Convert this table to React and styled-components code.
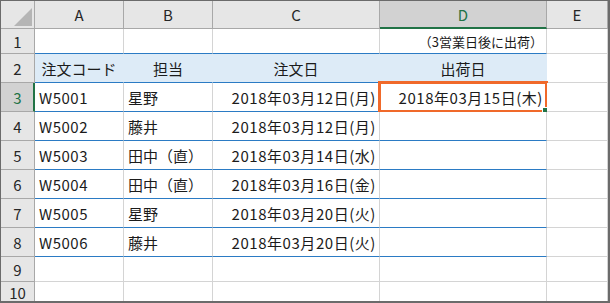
import styled, { createGlobalStyle } from "styled-components";

const GlobalStyle = createGlobalStyle`
  body {
    margin: 0;
    background: #ffffff;
  }
`;

const FONT = `"Noto Sans CJK JP", "Noto Sans", sans-serif`;
const GRID = "#d4d4d4";
const HEAD_LINE = "#a8a8a8";
const TABLE_LINE = "#2b7bc4";
const TABLE_FILL = "#ddebf7";
const EXCEL_GREEN = "#217346";

let Sheet = styled.div`
  box-sizing: border-box;
  width: 610px;
  height: 303px;
  display: grid;
  grid-template-columns: 34px 89px 89px 167px 167px 1fr;
  grid-template-rows: 28px 25px repeat(7, 29px) 25px 1fr;
  border-style: solid;
  border-color: #6b6b6b;
  border-width: 1px 2px 2px 1px;
  overflow: hidden;
  font-family: ${FONT};
  color: #1b1b1b;
`;

let Corner = styled.div`
  background: #e6e6e6;
  border-right: 1px solid ${HEAD_LINE};
  border-bottom: 1px solid ${HEAD_LINE};
  display: flex;
  align-items: flex-end;
  justify-content: flex-end;
  padding: 0 2px 2px 0;
`;

let ColHeader = styled.div`
  box-sizing: border-box;
  background: ${(p) => (p.$active ? "#d2d2d2" : "#e6e6e6")};
  color: ${(p) => (p.$active ? EXCEL_GREEN : "#262626")};
  border-right: 1px solid ${HEAD_LINE};
  border-bottom: ${(p) =>
    p.$active ? `2px solid ${EXCEL_GREEN}` : `1px solid ${HEAD_LINE}`};
  display: flex;
  align-items: center;
  justify-content: center;
  font-size: 15px;
  padding-top: ${(p) => (p.$active ? "1px" : "0")};
`;

let RowHeader = styled.div`
  box-sizing: border-box;
  background: ${(p) => (p.$active ? "#d2d2d2" : "#e6e6e6")};
  color: ${(p) => (p.$active ? EXCEL_GREEN : "#262626")};
  border-bottom: 1px solid ${HEAD_LINE};
  border-right: ${(p) =>
    p.$active ? `2px solid ${EXCEL_GREEN}` : `1px solid ${HEAD_LINE}`};
  display: flex;
  align-items: center;
  justify-content: center;
  font-size: 15px;
  padding-left: ${(p) => (p.$active ? "1px" : "0")};
`;

let Cell = styled.div`
  position: relative;
  box-sizing: border-box;
  background: ${(p) => (p.$fill ? TABLE_FILL : "#ffffff")};
  border-right: 1px solid ${(p) => (p.$fill ? TABLE_FILL : GRID)};
  border-bottom: 1px solid ${(p) => (p.$tableLine ? TABLE_LINE : GRID)};
  display: flex;
  align-items: center;
  justify-content: ${(p) =>
    p.$align === "right" ? "flex-end" : p.$align === "center" ? "center" : "flex-start"};
  padding: 1px ${(p) => (p.$align === "right" ? "3px" : "4px")} 0 4px;
  font-size: ${(p) => (p.$small ? "13px" : "15px")};
  letter-spacing: ${(p) => p.$spacing || "0"};
  white-space: nowrap;
`;

let Selection = styled.div`
  position: absolute;
  top: -2px;
  left: -2px;
  right: -2px;
  bottom: -2px;
  border: 3px solid #f0692a;
  pointer-events: none;
`;

let FillHandle = styled.div`
  position: absolute;
  right: -4px;
  bottom: -4px;
  width: 5px;
  height: 5px;
  background: ${EXCEL_GREEN};
  border: 1px solid #ffffff;
`;

const columns = ["A", "B", "C", "D", "E"];
const align = ["left", "left", "right", "right", "left"];
// codes and dates use wider figures than the default digits
const spacing = ["0.5px", "0", "0.55px", "0.55px", "0"];

const rows = [
  { n: 1, cells: ["", "", "", "（3営業日後に出荷）", ""] },
  { n: 2, header: true, cells: ["注文コード", "担当", "注文日", "出荷日", ""] },
  { n: 3, cells: ["W5001", "星野", "2018年03月12日(月)", "2018年03月15日(木)", ""] },
  { n: 4, cells: ["W5002", "藤井", "2018年03月12日(月)", "", ""] },
  { n: 5, cells: ["W5003", "田中（直）", "2018年03月14日(水)", "", ""] },
  { n: 6, cells: ["W5004", "田中（直）", "2018年03月16日(金)", "", ""] },
  { n: 7, cells: ["W5005", "星野", "2018年03月20日(火)", "", ""] },
  { n: 8, cells: ["W5006", "藤井", "2018年03月20日(火)", "", ""] },
  { n: 9, cells: ["", "", "", "", ""] },
  { n: 10, cells: ["", "", "", "", ""] },
];

function CornerMark() {
  return (
    <svg width="18" height="18" viewBox="0 0 18 18">
      <polygon points="18,0 18,18 0,18" fill="#b5b5b5" />
    </svg>
  );
}

export default function App() {
  return (
    <>
      <GlobalStyle />
      <Sheet>
        <Corner>
          <CornerMark />
        </Corner>
        {columns.map((c) => (
          <ColHeader key={c} $active={c === "D"}>
            {c}
          </ColHeader>
        ))}
        {rows.map((row) => (
          <Row key={row.n} row={row} />
        ))}
      </Sheet>
    </>
  );
}

function Row({ row }) {
  let inTable = row.n >= 1 && row.n <= 8;
  return (
    <>
      <RowHeader $active={row.n === 3}>{row.n}</RowHeader>
      {row.cells.map((text, i) => {
        let tableCol = i < 4;
        let selected = row.n === 3 && i === 3;
        let plain = !row.header && row.n > 2;
        return (
          <Cell
            key={i}
            $align={row.header ? "center" : align[i]}
            $fill={row.header && tableCol}
            $tableLine={inTable && tableCol}
            $small={row.n === 1}
            $spacing={plain ? spacing[i] : "0"}
          >
            {text}
            {selected && (
              <Selection>
                <FillHandle />
              </Selection>
            )}
          </Cell>
        );
      })}
    </>
  );
}
